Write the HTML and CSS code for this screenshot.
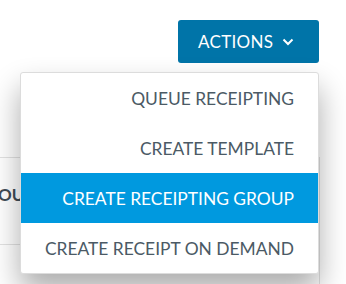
FILE: index.html
```html
<!DOCTYPE html>
<html>
<head>
    <title>Receipting - Actions</title>
    <link rel="stylesheet" href="styles.css">
</head>
<body>
    <div class="toolbar">
        <div class="dropdown">
            <button type="button" class="actions-btn">
                ACTIONS
                <svg class="chevron" width="12" height="8" viewBox="0 0 12 8">
                    <path d="M1.5 1.5 L6 6 L10.5 1.5" fill="none" stroke="#fff" stroke-width="2"/>
                </svg>
            </button>
            <ul class="menu">
                <li class="menu-item">QUEUE RECEIPTING</li>
                <li class="menu-item">CREATE TEMPLATE</li>
                <li class="menu-item active">CREATE RECEIPTING GROUP</li>
                <li class="menu-item">CREATE RECEIPT ON DEMAND</li>
            </ul>
        </div>
    </div>

    <div class="panel">
        <div class="row">
            <span class="row-label">GROUP NAME</span>
        </div>
        <div class="row"></div>
    </div>
</body>
</html>
```

FILE: styles.css
```css
body {
    font-family: Lato, "Liberation Sans", sans-serif;
    margin: 0;
    background-color: #fff;
    overflow: hidden;
}

.toolbar {
    display: flex;
    justify-content: flex-end;
    padding: 20px 27px 0 0;
    height: 157px;
    box-sizing: border-box;
}

.dropdown {
    position: relative;
}

.actions-btn {
    display: flex;
    align-items: center;
    gap: 9px;
    width: 141px;
    height: 43px;
    padding: 0 0 0 20px;
    background-color: #0074a8;
    color: #fff;
    border: none;
    border-radius: 3px;
    font-family: Lato, "Liberation Sans", sans-serif;
    font-size: 17px;
    letter-spacing: 0.3px;
    cursor: pointer;
}

.chevron {
    margin-top: 1px;
}

.menu {
    position: absolute;
    top: 52px;
    right: 0;
    width: 299px;
    margin: 0;
    padding: 0;
    list-style: none;
    background-color: #fff;
    border: 1px solid #dcdcdc;
    border-radius: 3px;
    box-sizing: border-box;
    box-shadow: 0 16px 30px rgba(0, 0, 0, 0.33);
    z-index: 2;
}

.menu-item {
    height: 50px;
    display: flex;
    align-items: center;
    justify-content: flex-end;
    padding-right: 24px;
    font-size: 17.4px;
    color: #4b5a65;
}

.menu-item.active {
    background-color: #0099df;
    color: #fff;
}

.panel {
    width: 320px;
    border-top: 1px solid #e2e2e2;
    border-right: 1px solid #e2e2e2;
    box-sizing: border-box;
}

.row {
    height: 87px;
    border-bottom: 1px solid #e2e2e2;
    box-sizing: border-box;
    padding-top: 26px;
}

.row-label {
    display: block;
    margin-left: -25px;
    font-weight: bold;
    font-size: 17px;
    color: #3f4d57;
    white-space: nowrap;
}
```
